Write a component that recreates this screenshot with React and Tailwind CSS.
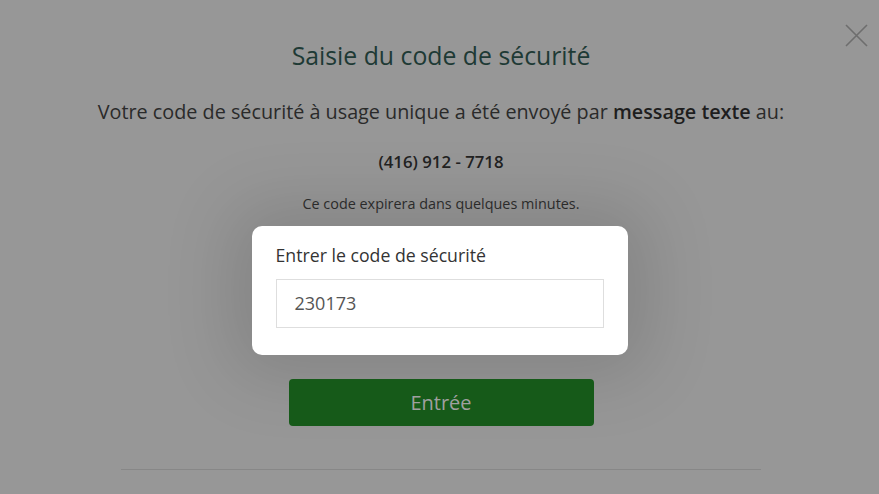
export default function App() {
  return (
    <div className="relative w-full min-h-screen bg-[#979797] font-['Open_Sans',sans-serif] overflow-hidden">
      {/* fermer */}
      <button className="absolute right-[11px] top-[24px] w-[23px] h-[23px]" aria-label="Fermer">
        <svg viewBox="0 0 23 23" className="w-full h-full" fill="none" stroke="#6e6e6e" strokeWidth="1.6">
          <path d="M1 1 L22 22 M22 1 L1 22" />
        </svg>
      </button>

      <div className="flex flex-col items-center pt-[38px] pl-[3px]">
        <h1 className="text-[24.8px] leading-[34px] text-[#1e3a35]">Saisie du code de sécurité</h1>

        <p className="mt-[26px] text-[19.8px] leading-[28px] text-[#2a2a2a]">
          Votre code de sécurité à usage unique a été envoyé par{" "}
          <span className="font-semibold text-[#1e1e1e]">message texte</span> au:
        </p>

        <div className="mt-[25px] text-[16.8px] leading-[22px] font-semibold text-[#222]">(416) 912 - 7718</div>

        <div className="mt-[21px] text-[14.4px] leading-[20px] text-[#2e2e2e]">Ce code expirera dans quelques minutes.</div>

        {/* carte mise en évidence */}
        <div className="mt-[12px] -ml-[3px] w-[376px] h-[129px] bg-white rounded-[10px] px-[24px] pt-[17px] shadow-[0_0_70px_20px_rgba(0,0,0,0.13)]">
          <label className="block text-[17.7px] leading-[24px] text-[#333]">Entrer le code de sécurité</label>
          <div className="mt-[12px] h-[49px] border border-[#dedede] flex items-center px-[18px] text-[18px] text-[#555]">
            230173
          </div>
        </div>

        <button className="mt-[24px] w-[305px] h-[47px] rounded-[4px] bg-[#165a19] text-[20px] text-[#a0a0a0]">
          Entrée
        </button>

        <div className="mt-[43px] w-[640px] h-px bg-[#878787]" />
      </div>
    </div>
  );
}
